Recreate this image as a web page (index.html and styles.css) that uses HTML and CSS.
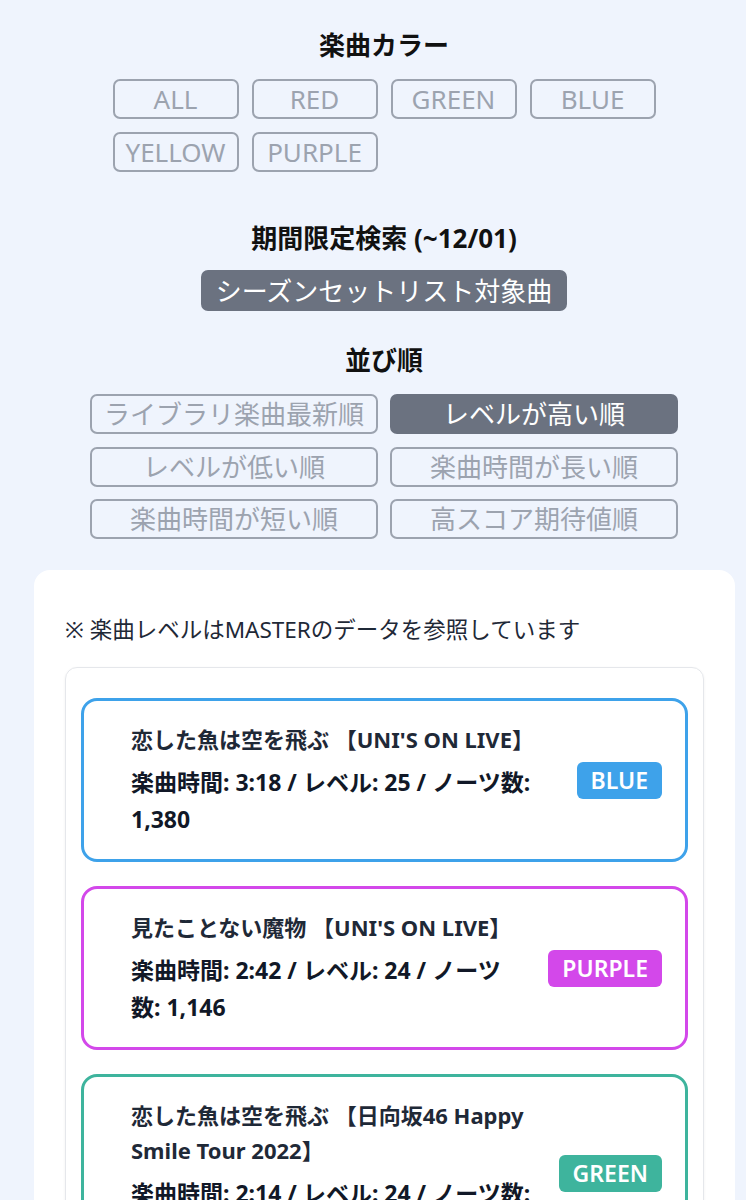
FILE: index.html
```html
<!DOCTYPE html>
<html lang="ja">
<head>
<meta charset="utf-8">
<title>楽曲一覧</title>
<link rel="stylesheet" href="styles.css">
</head>
<body>
<div class="page">
  <section class="filter">
    <h2 class="filter-title">楽曲カラー</h2>
    <div class="color-grid">
      <button class="opt">ALL</button>
      <button class="opt">RED</button>
      <button class="opt">GREEN</button>
      <button class="opt">BLUE</button>
      <button class="opt">YELLOW</button>
      <button class="opt">PURPLE</button>
    </div>
  </section>

  <section class="filter season">
    <h2 class="filter-title">期間限定検索 (~12/01)</h2>
    <div class="season-row">
      <button class="opt opt-active season-btn">シーズンセットリスト対象曲</button>
    </div>
  </section>

  <section class="filter sort">
    <h2 class="filter-title">並び順</h2>
    <div class="sort-grid">
      <button class="opt">ライブラリ楽曲最新順</button>
      <button class="opt opt-active">レベルが高い順</button>
      <button class="opt">レベルが低い順</button>
      <button class="opt">楽曲時間が長い順</button>
      <button class="opt">楽曲時間が短い順</button>
      <button class="opt">高スコア期待値順</button>
    </div>
  </section>

  <main class="panel">
    <p class="note">※ 楽曲レベルはMASTERのデータを参照しています</p>
    <div class="list">
      <article class="song song-blue">
        <div class="song-info">
          <h3 class="song-title">恋した魚は空を飛ぶ 【UNI'S ON LIVE】</h3>
          <p class="song-stats">楽曲時間: 3:18 / レベル: 25 / ノーツ数: 1,380</p>
        </div>
        <span class="badge badge-blue">BLUE</span>
      </article>
      <article class="song song-purple">
        <div class="song-info">
          <h3 class="song-title">見たことない魔物 【UNI'S ON LIVE】</h3>
          <p class="song-stats">楽曲時間: 2:42 / レベル: 24 / ノーツ数: 1,146</p>
        </div>
        <span class="badge badge-purple">PURPLE</span>
      </article>
      <article class="song song-green">
        <div class="song-info">
          <h3 class="song-title">恋した魚は空を飛ぶ 【日向坂46 Happy Smile Tour 2022】</h3>
          <p class="song-stats">楽曲時間: 2:14 / レベル: 24 / ノーツ数: 1,005</p>
        </div>
        <span class="badge badge-green">GREEN</span>
      </article>
    </div>
  </main>
</div>
</body>
</html>
```

FILE: styles.css
```css
* { box-sizing: border-box; }

html, body {
  margin: 0;
  padding: 0;
  background: #eff4fd;
}

body {
  font-family: "Noto Sans", "Noto Sans CJK JP", sans-serif;
  color: #1f2937;
}

.page {
  padding: 27px 0 0 22px;
}

.filter-title {
  margin: 0;
  font-size: 26px;
  line-height: 36px;
  font-weight: 700;
  text-align: center;
  color: #111;
}

.color-grid {
  display: grid;
  grid-template-columns: repeat(4, 126px);
  justify-content: center;
  gap: 13px 13px;
  margin-top: 16px;
}

.opt {
  font-family: inherit;
  font-size: 26px;
  line-height: 1;
  height: 40px;
  padding: 0 6px;
  border: 2px solid #9ca3af;
  border-radius: 7px;
  background: transparent;
  color: #9ca3af;
  white-space: nowrap;
}

.opt-active {
  background: #6b7280;
  border-color: #6b7280;
  color: #fff;
}

.season {
  margin-top: 48px;
}

.season-row {
  display: flex;
  justify-content: center;
  margin-top: 14px;
}

.season-btn {
  height: 41px;
  padding: 0 13px;
}

.sort {
  margin-top: 31px;
}

.sort-grid {
  display: grid;
  grid-template-columns: repeat(2, 288px);
  justify-content: center;
  gap: 12.5px 12px;
  margin-top: 16px;
}

.panel {
  margin: 31px 11px 0 12px;
  background: #fff;
  border-radius: 16px;
  padding: 43px 31px 0 31px;
  min-height: 700px;
}

.note {
  margin: 0 0 21px;
  font-size: 22.5px;
  line-height: 33px;
  color: #1f2937;
}

.list {
  border: 1px solid #e5e7eb;
  border-radius: 12px;
  box-shadow: 0 1px 3px rgba(0, 0, 0, 0.06);
  padding: 30px 15px 30px 15px;
  display: flex;
  flex-direction: column;
  gap: 24px;
}

.song {
  display: flex;
  align-items: center;
  gap: 26px;
  border: 3px solid;
  border-radius: 16px;
  padding: 21px 23px 21px 47px;
}

.song-blue { border-color: #3ea2ea; }
.song-purple { border-color: #d348ea; }
.song-green { border-color: #3eb49d; }

.song-info {
  flex: 1;
  min-width: 0;
}

.song-title {
  margin: 0;
  font-size: 22px;
  line-height: 35px;
  font-weight: 700;
  color: #1f2937;
}

.song-stats {
  margin: 7px 0 0;
  font-size: 23px;
  line-height: 37px;
  font-weight: 700;
  color: #111827;
}

.badge {
  flex: none;
  height: 37px;
  line-height: 37px;
  padding: 0 14px;
  border-radius: 6px;
  font-size: 23px;
  font-weight: 600;
  color: #fff;
}

.badge-blue { background: #3ea2ea; }
.badge-purple { background: #d348ea; }
.badge-green { background: #3eb49d; }
```
